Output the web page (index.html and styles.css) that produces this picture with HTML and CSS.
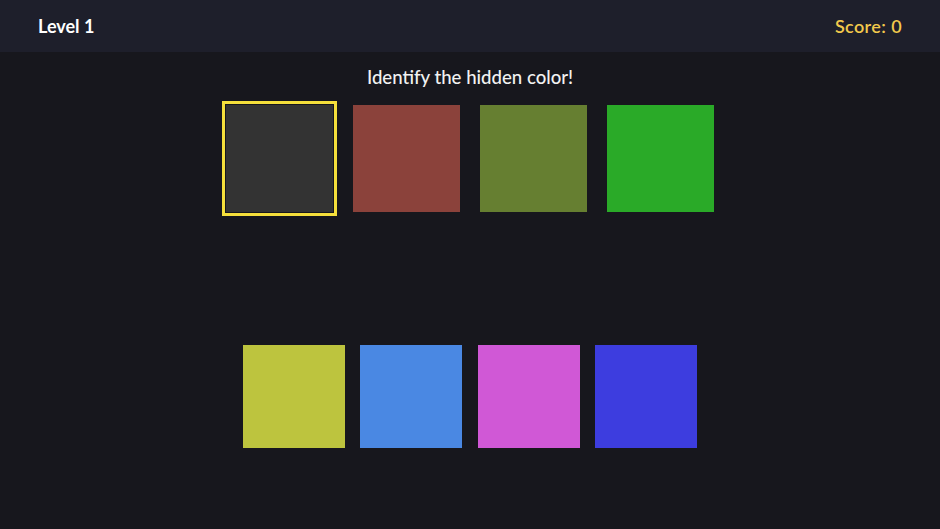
FILE: index.html
```html
<!DOCTYPE html>
<html>
<head>
<meta charset="utf-8">
<link rel="stylesheet" href="styles.css">
</head>
<body>
<header class="topbar">
  <div class="level">Level 1</div>
  <div class="score">Score: 0</div>
</header>
<main class="game">
  <h1 class="prompt">Identify the hidden color!</h1>
  <div class="row row-top">
    <div class="swatch big hidden selected"></div>
    <div class="swatch big c-brick"></div>
    <div class="swatch big c-olive"></div>
    <div class="swatch big c-green"></div>
  </div>
  <div class="row row-bottom">
    <div class="swatch small c-lime"></div>
    <div class="swatch small c-blue"></div>
    <div class="swatch small c-pink"></div>
    <div class="swatch small c-indigo"></div>
  </div>
</main>
</body>
</html>
```
FILE: styles.css
```css
html, body {
  margin: 0;
  padding: 0;
  height: 100%;
}
body {
  background: #17171d;
  font-family: "Lato", "Open Sans", sans-serif;
  color: #ffffff;
  overflow: hidden;
}
.topbar {
  height: 52px;
  background: #1e1f2b;
  display: flex;
  align-items: center;
  justify-content: space-between;
  padding: 0 38px;
  box-sizing: border-box;
  font-size: 18px;
  font-weight: 700;
}
.level { color: #ffffff; }
.score { color: #f2c94c; font-weight: 600; letter-spacing: 0.4px; }
.game {
  display: flex;
  flex-direction: column;
  align-items: center;
}
.prompt {
  margin: 14px 0 0;
  font-size: 18.6px;
  font-weight: 500;
  color: #f2f2f2;
  line-height: 22px;
}
.row {
  display: flex;
}
.row-top {
  margin-top: 17px;
  gap: 20px;
}
.row-bottom {
  margin-top: 133px;
  gap: 15.5px;
}
.swatch.big { width: 107px; height: 107px; }
.swatch.small { width: 102px; height: 103px; }
.selected {
  outline: 3px solid #f5df3b;
  outline-offset: 1px;
}
.hidden { background: #333333; }
.c-brick { background: #8b423b; }
.c-olive { background: #667f31; }
.c-green { background: #2aaa28; }
.c-lime { background: #bdc43e; }
.c-blue { background: #4a88e3; }
.c-pink { background: #d058d6; }
.c-indigo { background: #3d3ddf; }
```
